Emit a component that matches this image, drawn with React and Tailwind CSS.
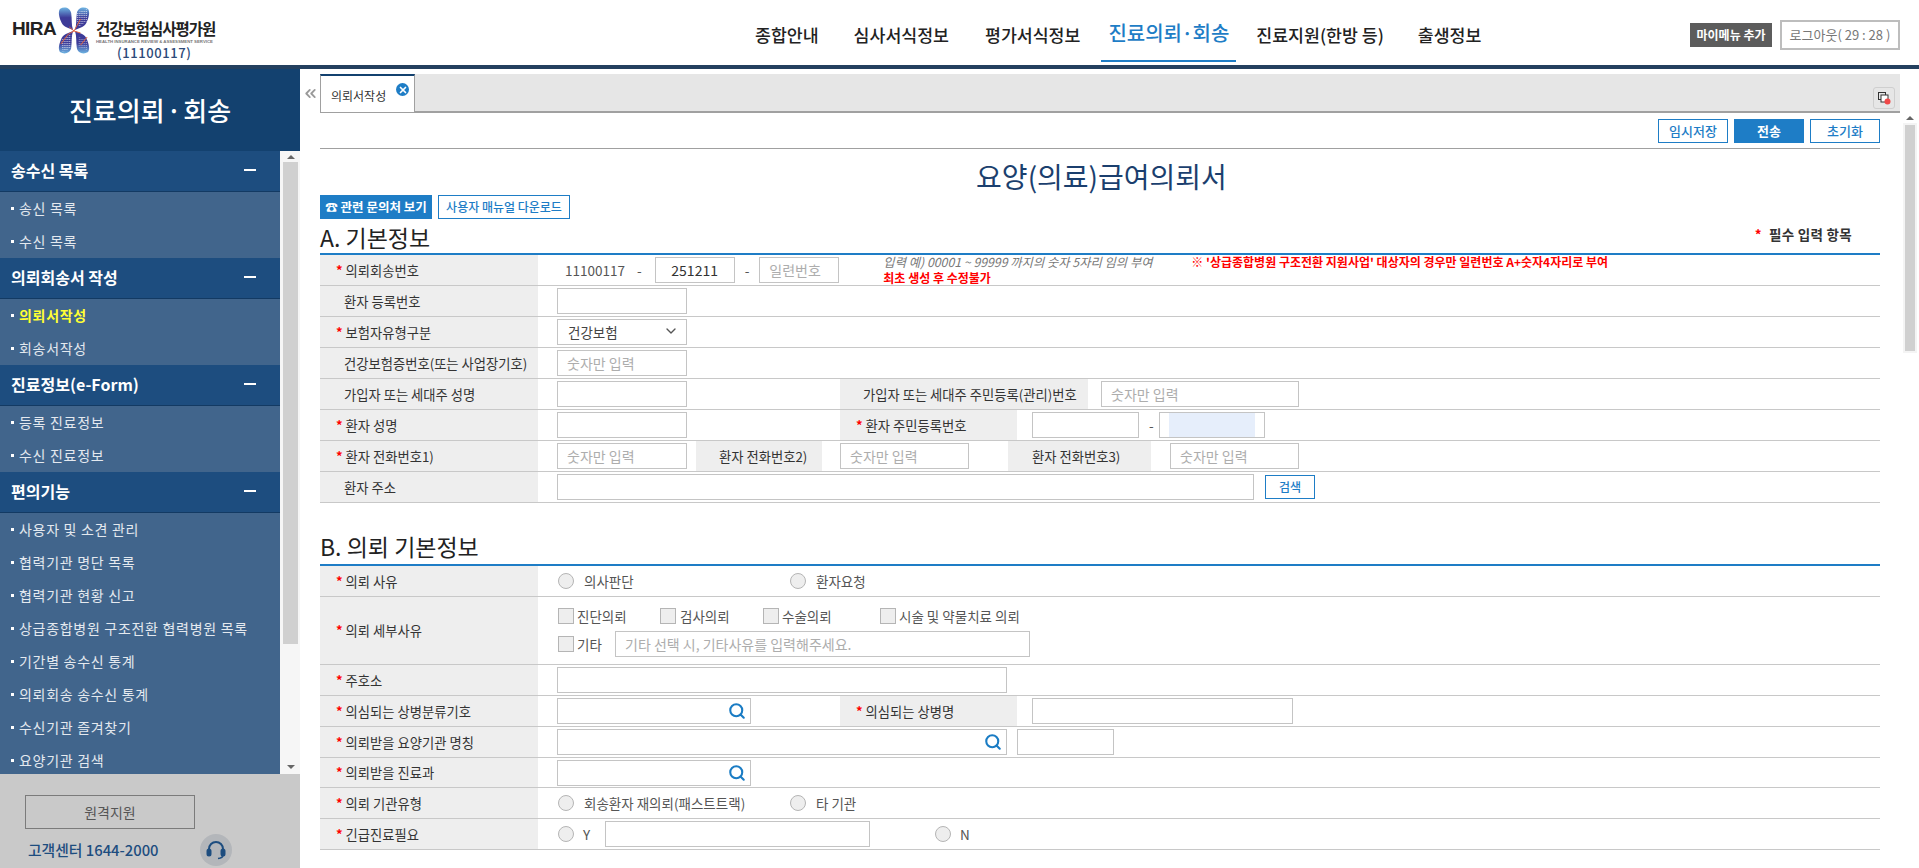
import React from 'react'
import { ChevronDown, ChevronsLeft, Search, X } from 'lucide-react'

const groups = [
    { title: '송수신 목록', items: ['송신 목록', '수신 목록'] },
    { title: '의뢰회송서 작성', items: ['의뢰서작성', '회송서작성'] },
    { title: '진료정보(e-Form)', items: ['등록 진료정보', '수신 진료정보'] },
    {
        title: '편의기능',
        items: ['사용자 및 소견 관리', '협력기관 명단 목록', '협력기관 현황 신고', '상급종합병원 구조전환 협력병원 목록', '기간별 송수신 통계', '의뢰회송 송수신 통계', '수신기관 즐겨찾기', '요양기관 검색'],
    },
]

const Logo = () => (
    <svg width="32" height="47" viewBox="0 0 34 47" preserveAspectRatio="none" className="shrink-0">
        <defs>
            <linearGradient id="lobeA" x1="0" y1="0" x2="0" y2="1">
                <stop offset="0" stopColor="#6db4e2" />
                <stop offset="0.45" stopColor="#3d3b98" />
                <stop offset="1" stopColor="#3d3b98" />
            </linearGradient>
            <linearGradient id="lobeB" x1="0" y1="1" x2="0" y2="0">
                <stop offset="0" stopColor="#6db4e2" />
                <stop offset="0.45" stopColor="#3d3b98" />
                <stop offset="1" stopColor="#3d3b98" />
            </linearGradient>
            <pattern id="dots" width="2" height="2" patternUnits="userSpaceOnUse">
                <rect width="1" height="1" fill="#ffffff" opacity="0.75" />
            </pattern>
        </defs>
        <path d="M2 2 C7 -1 13 1 14 6 C15 12 14 18 16 23 C11 21 5 20 3 14 C1 9 0 5 2 2Z" fill="url(#lobeA)" />
        <path d="M32 2 C27 -1 21 1 20 6 C19 12 20 18 18 23 C23 21 29 20 31 14 C33 9 34 5 32 2Z" fill="url(#lobeA)" />
        <path d="M2 45 C7 48 13 46 14 41 C15 35 14 29 16 24 C11 26 5 27 3 33 C1 38 0 42 2 45Z" fill="url(#lobeB)" />
        <path d="M32 45 C27 48 21 46 20 41 C19 35 20 29 18 24 C23 26 29 27 31 33 C33 38 34 42 32 45Z" fill="url(#lobeB)" />
        <path d="M18 6 L31 2 L31 14 L22 20Z" fill="url(#dots)" />
        <path d="M3 33 L14 27 L14 41 L5 45Z" fill="url(#dots)" />
        <path d="M22 30 L31 33 L31 43 L21 40Z" fill="url(#dots)" opacity="0.7" />
        <path d="M12 20 L17 24 L24 26 M17 24 L11 27 L3 37 M24 12 L17 24 M24 38 L31 30" stroke="#e2603a" strokeWidth="1" fill="none" />
    </svg>
)

const Header = () => (
    <header className="h-[69px] shrink-0 flex items-start bg-white border-b-[4px] border-[#24405f]">
        <div className="relative w-[230px] h-[65px] shrink-0 flex pl-[12px] pt-[7px]">
            <span className="mt-[11px] w-[46px] font-['Liberation_Sans',sans-serif] font-bold text-[19px] leading-[22px] text-[#222] tracking-[-0.6px]">HIRA</span>
            <Logo />
            <div className="ml-[6px] flex flex-col">
                <span className="mt-[11px] text-[15.5px] leading-[20px] font-bold text-[#222] tracking-[-1px] whitespace-nowrap">건강보험심사평가원</span>
                <span className="text-[4.3px] leading-[6px] mt-[1px] text-[#777] font-['Liberation_Sans',sans-serif] font-bold whitespace-nowrap">HEALTH INSURANCE REVIEW &amp; ASSESSMENT SERVICE</span>
                <span className="mt-[0px] ml-[21px] text-[13px] leading-[15px] font-medium text-[#2d4a78] tracking-[0.6px]">(11100117)</span>
            </div>
        </div>
        <nav className="flex items-start h-[62px] text-[#222] text-[17.3px] font-medium whitespace-nowrap">
            <a className="ml-[525px] mt-[22px]">종합안내</a>
            <a className="ml-[35px] mt-[22px]">심사서식정보</a>
            <a className="ml-[36px] mt-[22px]">평가서식정보</a>
            <a className="ml-[21px] h-[62px] px-[7px] pt-[18px] text-[20px] text-[#1e7dc6] border-b-2 border-[#1e7dc6] [word-spacing:-5px]">진료의뢰 · 회송</a>
            <a className="ml-[20px] mt-[22px]">진료지원(한방 등)</a>
            <a className="ml-[34px] mt-[22px]">출생정보</a>
        </nav>
        <div className="ml-auto mr-[19px] mt-[20px] flex items-center gap-[8px]">
            <button className="w-[82px] h-[24px] bg-[#5c5c5c] text-white text-[12px] font-bold">마이메뉴 추가</button>
            <button className="w-[120px] h-[30px] border-2 border-[#bdbdbd] text-[#777] text-[13px]">로그아웃( 29 : 28 )</button>
        </div>
    </header>
)

const Sidebar = () => (
    <aside className="w-[300px] shrink-0 flex flex-col h-full bg-[#c9c9c9]">
        <div className="h-[82px] shrink-0 bg-[#13416f] flex items-center justify-center pb-[2px] text-white text-[26px] font-medium [word-spacing:-4px]">진료의뢰 · 회송</div>
        <div className="h-[623px] shrink-0 flex bg-[#f6f6f6] overflow-hidden">
            <div className="w-[280px] shrink-0 bg-[#41658c] overflow-hidden">
                {groups.map((g) => (
                    <div key={g.title}>
                        <div className="h-[41px] flex items-center justify-between pl-[11px] pr-[24px] pb-[2px] bg-[#1d4d7f] border-b border-[#133a63] text-white text-[16px] font-bold">
                            <span>{g.title}</span>
                            <span className="w-[12px] h-[2px] bg-white" />
                        </div>
                        {g.items.map((item) => (
                            <div key={item} className={`h-[33px] flex items-center pl-[11px] text-[14px] tracking-[0.7px] ${item === '의뢰서작성' ? 'text-[#ffff33] font-bold' : 'text-[#e4e9ef]'}`}>
                                <span className="w-[3px] h-[3px] bg-white mr-[5px]" />
                                {item}
                            </div>
                        ))}
                    </div>
                ))}
            </div>
            <div className="w-[20px] flex flex-col items-center pl-[1px]">
                <span className="mt-[4px] mb-[2px] border-x-[4px] border-x-transparent border-b-[4px] border-b-[#666]" />
                <div className="mt-[1px] w-[15px] h-[482px] bg-[#d0d0d0]" />
                <span className="mt-[121px] border-x-[4px] border-x-transparent border-t-[4px] border-t-[#666]" />
            </div>
        </div>
        <div className="flex-1 flex flex-col pl-[25px] pt-[21px]">
            <button className="w-[170px] h-[34px] border border-[#7b7b7b] text-[14px] text-[#555]">원격지원</button>
            <div className="flex items-center mt-[5px] ml-[3px]">
                <span className="w-[172px] text-[14.8px] font-medium text-[#1d4d7f] whitespace-nowrap">고객센터 1644-2000</span>
                <span className="w-[32px] h-[32px] rounded-full bg-[#b3b6ba] flex items-center justify-center">
                    <svg width="24" height="24" viewBox="0 0 24 24" fill="none" stroke="#1d4d7f" strokeWidth="2">
                        <path d="M5 14 V11 a7 7 0 0 1 14 0 V14" />
                        <rect x="3.5" y="11.5" width="3" height="6" rx="1.5" fill="#1d4d7f" />
                        <rect x="17.5" y="11.5" width="3" height="6" rx="1.5" fill="#1d4d7f" />
                        <path d="M19 17 q0 3 -5 3.5" strokeWidth="1.5" />
                    </svg>
                </span>
            </div>
        </div>
    </aside>
)

const Label = ({ req, children, className = 'w-[218px] pl-[24px]' }) => (
    <div className={`h-full shrink-0 bg-[#eeeeee] flex items-center pt-[1px] whitespace-nowrap text-[13.3px] text-[#333] ${className}`}>
        {req && <span className="text-[#f00] font-bold mr-[3px] -ml-[8px] -mt-[2px] text-[13px]">*</span>}
        {children}
    </div>
)

const Field = ({ className = 'w-[130px]', ...props }) => (
    <input
        className={`h-[26px] shrink-0 border border-[#c4c4c4] bg-white px-[9px] text-[14px] text-[#333] outline-none placeholder:text-[#adadad] ${className}`}
        {...props}
    />
)

const SearchField = ({ className }) => (
    <div className={`relative h-[26px] shrink-0 border border-[#c4c4c4] bg-white ${className}`}>
        <Search size={18} strokeWidth={2.8} className="absolute right-[4px] top-[3px] text-[#1a7cc4]" />
    </div>
)

const Row = ({ h = 'h-[31px]', children }) => (
    <div className={`${h} flex items-center border-b border-[#c8c8c8]`}>{children}</div>
)

const Radio = ({ className = '' }) => (
    <input type="radio" className={`appearance-none w-[16px] h-[16px] shrink-0 rounded-full border border-[#b5b5b5] bg-[#eeeeee] ${className}`} />
)

const Check = ({ className = '' }) => (
    <input type="checkbox" className={`appearance-none w-[16px] h-[16px] shrink-0 border border-[#b5b5b5] bg-[#eeeeee] ${className}`} />
)

const Text = ({ className = '', children }) => (
    <span className={`text-[13.5px] text-[#555] whitespace-nowrap ${className}`}>{children}</span>
)

const OutlineButton = ({ className = '', children }) => (
    <button className={`border border-[#1e7dc6] bg-white text-[#1e7dc6] text-[12px] font-medium ${className}`}>{children}</button>
)

const SectionA = () => (
    <div className="border-t-2 border-[#1e7dc6]">
        <Row>
            <Label req>의뢰회송번호</Label>
            <Text className="ml-[27px] text-[#333]">11100117</Text>
            <Text className="ml-[12px] text-[#333]">-</Text>
            <Field className="ml-[13px] w-[80px] text-center" defaultValue="251211" />
            <Text className="ml-[10px] text-[#333]">-</Text>
            <Field className="ml-[10px] w-[80px]" placeholder="일련번호" />
            <div className="ml-[44px] flex flex-col text-[12px] leading-[16px] whitespace-nowrap">
                <div className="flex">
                    <span className="w-[308px] text-[12.3px] italic text-[#777]">입력 예) 00001 ~ 99999 까지의 숫자 5자리 임의 부여</span>
                    <span className="font-bold text-[#f00]">※ '상급종합병원 구조전환 지원사업' 대상자의 경우만 일련번호 A+숫자4자리로 부여</span>
                </div>
                <span className="font-bold text-[#f00]">최초 생성 후 수정불가</span>
            </div>
        </Row>
        <Row>
            <Label>환자 등록번호</Label>
            <Field className="ml-[19px] w-[130px]" />
        </Row>
        <Row>
            <Label req>보험자유형구분</Label>
            <div className="relative ml-[19px]">
                <select className="appearance-none w-[130px] h-[26px] border border-[#c4c4c4] bg-white pl-[10px] text-[13.5px] text-[#444] outline-none">
                    <option>건강보험</option>
                </select>
                <ChevronDown size={16} className="absolute right-[8px] top-[4px] text-[#555] pointer-events-none" />
            </div>
        </Row>
        <Row>
            <Label>건강보험증번호(또는 사업장기호)</Label>
            <Field className="ml-[19px] w-[130px]" placeholder="숫자만 입력" />
        </Row>
        <Row>
            <Label>가입자 또는 세대주 성명</Label>
            <Field className="ml-[19px] w-[130px]" />
            <Label className="ml-[153px] w-[248px] pl-[23px]">가입자 또는 세대주 주민등록(관리)번호</Label>
            <Field className="ml-[13px] w-[198px]" placeholder="숫자만 입력" />
        </Row>
        <Row>
            <Label req>환자 성명</Label>
            <Field className="ml-[19px] w-[130px]" />
            <Label req className="ml-[153px] w-[177px] pl-[24px]">환자 주민등록번호</Label>
            <Field className="ml-[15px] w-[107px]" />
            <Text className="ml-[10px] text-[#333]">-</Text>
            <div className="ml-[5px] w-[106px] h-[26px] border border-[#c4c4c4] px-[9px]">
                <div className="h-full bg-[#e6eefb]" />
            </div>
        </Row>
        <Row>
            <Label req>환자 전화번호1)</Label>
            <Field className="ml-[19px] w-[130px]" placeholder="숫자만 입력" />
            <Label className="ml-[9px] w-[126px] pl-[23px]">환자 전화번호2)</Label>
            <Field className="ml-[18px] w-[129px]" placeholder="숫자만 입력" />
            <Label className="ml-[39px] w-[143px] pl-[24px]">환자 전화번호3)</Label>
            <Field className="ml-[19px] w-[129px]" placeholder="숫자만 입력" />
        </Row>
        <Row>
            <Label>환자 주소</Label>
            <Field className="ml-[19px] w-[697px]" />
            <OutlineButton className="ml-[11px] w-[50px] h-[24px]">검색</OutlineButton>
        </Row>
    </div>
)

const SectionB = () => (
    <div className="border-t-2 border-[#1e7dc6]">
        <Row>
            <Label req>의뢰 사유</Label>
            <Radio className="ml-[20px]" />
            <Text className="ml-[10px] w-[206px]">의사판단</Text>
            <Radio />
            <Text className="ml-[10px]">환자요청</Text>
        </Row>
        <Row h="h-[68px]">
            <Label req>의뢰 세부사유</Label>
            <div className="ml-[20px] self-start mt-[6px] flex flex-col gap-[2px]">
                <div className="flex items-center h-[26px]">
                    <Check />
                    <Text className="ml-[3px] w-[83px]">진단의뢰</Text>
                    <Check />
                    <Text className="ml-[4px] w-[83px]">검사의뢰</Text>
                    <Check />
                    <Text className="ml-[3px] w-[98px]">수술의뢰</Text>
                    <Check />
                    <Text className="ml-[3px]">시술 및 약물치료 의뢰</Text>
                </div>
                <div className="flex items-center h-[26px]">
                    <Check />
                    <Text className="ml-[3px] w-[38px]">기타</Text>
                    <Field className="w-[415px]" placeholder="기타 선택 시, 기타사유를 입력해주세요." />
                </div>
            </div>
        </Row>
        <Row>
            <Label req>주호소</Label>
            <Field className="ml-[19px] w-[450px]" />
        </Row>
        <Row>
            <Label req>의심되는 상병분류기호</Label>
            <SearchField className="ml-[19px] w-[194px]" />
            <Label req className="ml-[89px] w-[177px] pl-[24px]">의심되는 상병명</Label>
            <Field className="ml-[15px] w-[261px]" />
        </Row>
        <Row>
            <Label req>의뢰받을 요양기관 명칭</Label>
            <SearchField className="ml-[19px] w-[450px]" />
            <Field className="ml-[10px] w-[97px]" />
        </Row>
        <Row h="h-[30px]">
            <Label req>의뢰받을 진료과</Label>
            <SearchField className="ml-[19px] w-[194px]" />
        </Row>
        <Row>
            <Label req>의뢰 기관유형</Label>
            <Radio className="ml-[20px]" />
            <Text className="ml-[10px] w-[206px]">회송환자 재의뢰(패스트트랙)</Text>
            <Radio />
            <Text className="ml-[10px]">타 기관</Text>
        </Row>
        <Row>
            <Label req>긴급진료필요</Label>
            <Radio className="ml-[20px]" />
            <Text className="ml-[9px] w-[22px]">Y</Text>
            <Field className="w-[265px]" />
            <Radio className="ml-[65px]" />
            <Text className="ml-[9px]">N</Text>
        </Row>
    </div>
)

const Content = () => (
    <main className="flex-1 flex h-full min-w-0 overflow-hidden">
        <div className="w-[20px] shrink-0 pt-[16px] pl-[2px]">
            <ChevronsLeft size={17} strokeWidth={2.6} className="text-[#9a9a9a]" />
        </div>
        <div className="w-[1580px] shrink-0 pt-[5px]">
            <div className="h-[39px] flex bg-[#e6e6e6] border-b-2 border-[#a0a0a0]">
                <div className="relative w-[95px] h-[38px] bg-white border-x border-[#a0a0a0] border-t-2 border-t-[#13416f] pl-[10px] pt-[11px] text-[12px] leading-[18px] text-[#333]">
                    의뢰서작성
                    <span className="absolute right-[5px] top-[7px] w-[13px] h-[13px] rounded-full bg-[#1e7dc6] flex items-center justify-center">
                        <X size={10} strokeWidth={4} className="text-white" />
                    </span>
                </div>
                <div className="ml-auto mr-[5px] mt-[13px] w-[22px] h-[22px] rounded-[3px] border border-[#cfcfcf] flex items-center justify-center">
                    <svg width="14" height="14" viewBox="0 0 14 14" fill="none" stroke="#333" strokeWidth="1">
                        <rect x="1.5" y="1.5" width="7" height="7" />
                        <rect x="4" y="4" width="7" height="7" fill="#fff" />
                        <circle cx="10.5" cy="10.5" r="3" fill="#f04848" stroke="none" />
                    </svg>
                </div>
            </div>
            <div className="w-[1560px]">
                <div className="h-[36px] flex justify-end items-start pt-[6px] gap-[6px] border-b border-[#a0a0a0]">
                    <OutlineButton className="w-[70px] h-[24px] text-[13px]">임시저장</OutlineButton>
                    <button className="w-[70px] h-[24px] bg-[#1e7dc6] text-white text-[13px] font-bold">전송</button>
                    <OutlineButton className="w-[70px] h-[24px] text-[13px]">초기화</OutlineButton>
                </div>
                <h1 className="mt-[8px] h-[39px] text-center text-[28px] leading-[39px] text-[#1b3f6e] ml-[3px]">요양(의료)급여의뢰서</h1>
                <div className="mt-[-1px] flex gap-[6px]">
                    <button className="w-[112px] h-[24px] bg-[#1e7dc6] text-white text-[12.5px] font-bold whitespace-nowrap">☎ 관련 문의처 보기</button>
                    <OutlineButton className="w-[132px] h-[24px]">사용자 매뉴얼 다운로드</OutlineButton>
                </div>
                <div className="h-[34px] flex items-start justify-between">
                    <h2 className="text-[23px] leading-[36px] text-[#222]">A. 기본정보</h2>
                    <span className="mt-[5px] mr-[28px] text-[13.5px] tracking-[0.3px] font-bold text-[#333]"><span className="text-[#f00] mr-[7px]">*</span>필수 입력 항목</span>
                </div>
                <SectionA />
                <h2 className="mt-[28px] h-[33px] text-[23px] leading-[31px] text-[#222]">B. 의뢰 기본정보</h2>
                <SectionB />
            </div>
        </div>
        <div className="flex-1 pt-[47px] flex flex-col items-center">
            <span className="border-x-[4px] border-x-transparent border-b-[4px] border-b-[#666]" />
            <div className="mt-[3px] w-[14px] bg-[#f4f4f4] px-[2px] py-[2px]">
                <div className="w-[10px] h-[226px] bg-[#d0d0d0]" />
            </div>
        </div>
    </main>
)

const App = () => (
    <div className="w-[1919px] h-[868px] flex flex-col overflow-hidden bg-white font-['Noto_Sans_CJK_KR','Liberation_Sans',sans-serif]">
        <Header />
        <div className="flex-1 flex min-h-0">
            <Sidebar />
            <Content />
        </div>
    </div>
)

export default App
